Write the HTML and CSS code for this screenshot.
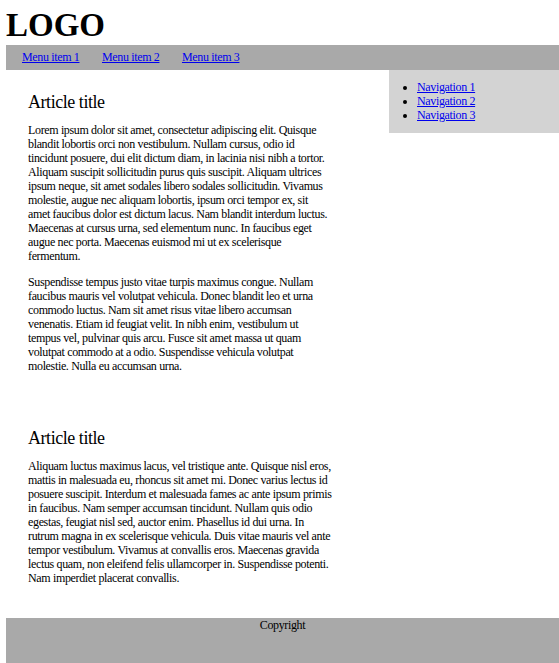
FILE: index.html
```html
<!DOCTYPE html>
<html lang="en">
<head>
<meta charset="utf-8">
<title>Layout</title>
<link rel="stylesheet" href="styles.css">
</head>
<body>
<header class="header">
  <h1 class="logo">LOGO</h1>
</header>
<nav class="menu">
  <ul class="menu-list">
    <li><a href="#">Menu item 1</a></li>
    <li><a href="#">Menu item 2</a></li>
    <li><a href="#">Menu item 3</a></li>
  </ul>
</nav>
<div class="content">
  <main class="main">
    <article class="article">
      <h2 class="article-title">Article title</h2>
      <p>Lorem ipsum dolor sit amet, consectetur adipiscing elit. Quisque blandit lobortis orci non vestibulum. Nullam cursus, odio id tincidunt posuere, dui elit dictum diam, in lacinia nisi nibh a tortor. Aliquam suscipit sollicitudin purus quis suscipit. Aliquam ultrices ipsum neque, sit amet sodales libero sodales sollicitudin. Vivamus molestie, augue nec aliquam lobortis, ipsum orci tempor ex, sit amet faucibus dolor est dictum lacus. Nam blandit interdum luctus. Maecenas at cursus urna, sed elementum nunc. In faucibus eget augue nec porta. Maecenas euismod mi ut ex scelerisque fermentum.</p>
      <p>Suspendisse tempus justo vitae turpis maximus congue. Nullam faucibus mauris vel volutpat vehicula. Donec blandit leo et urna commodo luctus. Nam sit amet risus vitae libero accumsan venenatis. Etiam id feugiat velit. In nibh enim, vestibulum ut tempus vel, pulvinar quis arcu. Fusce sit amet massa ut quam volutpat commodo at a odio. Suspendisse vehicula volutpat molestie. Nulla eu accumsan urna.</p>
    </article>
    <article class="article">
      <h2 class="article-title">Article title</h2>
      <p>Aliquam luctus maximus lacus, vel tristique ante. Quisque nisl eros, mattis in malesuada eu, rhoncus sit amet mi. Donec varius lectus id posuere suscipit. Interdum et malesuada fames ac ante ipsum primis in faucibus. Nam semper accumsan tincidunt. Nullam quis odio egestas, feugiat nisl sed, auctor enim. Phasellus id dui urna. In rutrum magna in ex scelerisque vehicula. Duis vitae mauris vel ante tempor vestibulum. Vivamus at convallis eros. Maecenas gravida lectus quam, non eleifend felis ullamcorper in. Suspendisse potenti. Nam imperdiet placerat convallis.</p>
    </article>
  </main>
  <aside class="sidebar">
    <ul class="side-list">
      <li><a href="#">Navigation 1</a></li>
      <li><a href="#">Navigation 2</a></li>
      <li><a href="#">Navigation 3</a></li>
    </ul>
  </aside>
</div>
<footer class="footer">Copyright</footer>
</body>
</html>
```
FILE: styles.css
```css
html, body {
  background: #ffffff;
}
body {
  margin: 0 0 0 6px;
  font-family: "Liberation Serif", "Times New Roman", serif;
  font-size: 12px;
  line-height: 14px;
  letter-spacing: -0.35px;
  color: #000000;
}
a {
  color: #0000ee;
}
.header {
  padding-top: 6px;
}
.logo {
  margin: 0 0 1px;
  font-size: 33px;
  line-height: 38px;
  font-weight: bold;
  letter-spacing: 0;
}
.menu {
  background: #a9a9a9;
  padding: 5px 0 6px 16px;
}
.menu-list {
  list-style: none;
  margin: 0;
  padding: 0;
  display: flex;
  gap: 22.5px;
}
.content {
  display: flex;
  align-items: flex-start;
}
.main {
  flex: 1;
  padding: 22px 0 33px 22px;
  display: flex;
  flex-direction: column;
  gap: 55px;
}
.article-title {
  margin: 0 0 10px;
  font-size: 18px;
  line-height: 21px;
  font-weight: normal;
  letter-spacing: -0.45px;
}
.article p {
  margin: 0;
  width: 304px;
}
.article p + p {
  margin-top: 12px;
}
.sidebar {
  width: 170px;
  flex: none;
  background: #d3d3d3;
}
.side-list {
  margin: 10px 0 11px;
  padding-left: 28px;
}
.footer {
  background: #a9a9a9;
  text-align: center;
  height: 60px;
}
```
